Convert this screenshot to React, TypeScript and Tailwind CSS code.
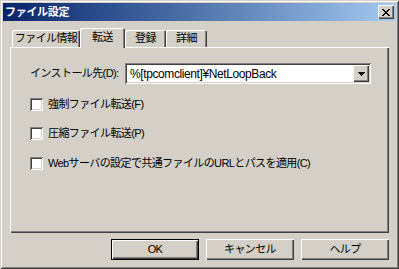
import React from "react"

const raised =
  "shadow-[inset_1px_1px_#ffffff,inset_-1px_-1px_#404040,inset_-2px_-2px_#808080]"

const closeX = [
  "XX....XX",
  ".XX..XX.",
  "..XXXX..",
  "...XX...",
  "..XXXX..",
  ".XX..XX.",
  "XX....XX",
]

function CloseButton() {
  return (
    <div
      className={`flex h-[14px] w-[16px] items-center justify-center bg-[#d4d0c8] ${raised}`}
    >
      <svg width="8" height="7" viewBox="0 0 8 7" shapeRendering="crispEdges">
        {closeX.map((row, y) =>
          row.split("").map((c, x) =>
            c === "X" ? (
              <rect key={`${x}-${y}`} x={x} y={y} width="1" height="1" fill="#000" />
            ) : null
          )
        )}
      </svg>
    </div>
  )
}

function Checkbox({ label }: { label: string }) {
  return (
    <div className="flex h-[13px] items-center">
      <span className="h-[13px] w-[13px] shrink-0 bg-white shadow-[inset_1px_1px_#808080,inset_-1px_-1px_#ffffff,inset_2px_2px_#404040,inset_-2px_-2px_#d4d0c8]" />
      <span className="ml-[5px] whitespace-nowrap tracking-[-0.6px]">{label}</span>
    </div>
  )
}

function Tab({
  label,
  width,
  active,
}: {
  label: string
  width: string
  active?: boolean
}) {
  return (
    <div
      className={`${width} ${
        active ? "relative z-10 -mb-px h-[20px] pt-[4px]" : "h-[17px] pt-[3px]"
      } flex justify-center rounded-t-[2px] bg-[#d4d0c8] tracking-[-0.6px] shadow-[inset_1px_1px_#ffffff,inset_-1px_0_#404040,inset_-2px_0_#808080]`}
    >
      {label}
    </div>
  )
}

function Button({ label, primary }: { label: string; primary?: boolean }) {
  return (
    <button
      type="button"
      className={`flex h-[21px] w-[88px] items-center justify-center bg-[#d4d0c8] tracking-[-0.6px] ${
        primary
          ? "shadow-[inset_0_0_0_1px_#000000,inset_2px_2px_#ffffff,inset_-2px_-2px_#404040,inset_-3px_-3px_#808080]"
          : raised
      }`}
    >
      {label}
    </button>
  )
}

export default function App() {
  return (
    <div className="flex h-[269px] w-[399px] flex-col bg-[#d4d0c8] p-[3px] font-['Liberation_Sans','Noto_Sans_CJK_JP',sans-serif] text-[11px] leading-none text-black shadow-[inset_1px_1px_#d4d0c8,inset_-1px_-1px_#404040,inset_2px_2px_#ffffff,inset_-2px_-2px_#808080]">
      {/* title bar */}
      <div className="flex h-[18px] shrink-0 items-center justify-between bg-gradient-to-r from-[#0a246a] to-[#a6caf0] pl-[2px] pr-[2px]">
        <span className="text-[11px] font-bold tracking-[-0.3px] text-white">ファイル設定</span>
        <CloseButton />
      </div>

      <div className="flex flex-col px-[7px]">
        {/* tabs */}
        <div className="mt-[7px] flex h-[19px] items-end pl-[2px]">
          <Tab label="ファイル情報" width="w-[68px]" />
          <Tab label="転送" width="w-[45px]" active />
          <Tab label="登録" width="w-[41px]" />
          <Tab label="詳細" width="w-[41px]" />
        </div>

        {/* panel */}
        <div className="flex h-[186px] flex-col pl-[20px] shadow-[inset_1px_1px_#ffffff,inset_-1px_-1px_#404040,inset_-2px_-2px_#808080]">
          <div className="mt-[16px] flex items-center">
            <span className="w-[95px] whitespace-nowrap tracking-[-0.6px]">インストール先(D):</span>
            <div className="flex h-[21px] w-[246px] items-center bg-white pl-[5px] pr-[2px] shadow-[inset_1px_1px_#808080,inset_-1px_-1px_#ffffff,inset_2px_2px_#404040,inset_-2px_-2px_#d4d0c8]">
              <span className="flex-1 text-[12px] tracking-[-0.4px]">%[tpcomclient]¥NetLoopBack</span>
              <div className={`flex h-[17px] w-[16px] items-center justify-center bg-[#d4d0c8] ${raised}`}>
                <svg width="7" height="4" viewBox="0 0 7 4" shapeRendering="crispEdges">
                  <path d="M0 0h7v1h-1v1h-1v1h-1v1h-1v-1h-1v-1h-1v-1h-1z" fill="#000" />
                </svg>
              </div>
            </div>
          </div>

          <div className="mt-[14px]">
            <Checkbox label="強制ファイル転送(F)" />
          </div>
          <div className="mt-[16px]">
            <Checkbox label="圧縮ファイル転送(P)" />
          </div>
          <div className="mt-[17px]">
            <Checkbox label="Webサーバの設定で共通ファイルのURLとパスを適用(C)" />
          </div>
        </div>

        {/* buttons */}
        <div className="mt-[6px] flex justify-end gap-[7px]">
          <Button label="OK" primary />
          <Button label="キャンセル" />
          <Button label="ヘルプ" />
        </div>
      </div>
    </div>
  )
}
